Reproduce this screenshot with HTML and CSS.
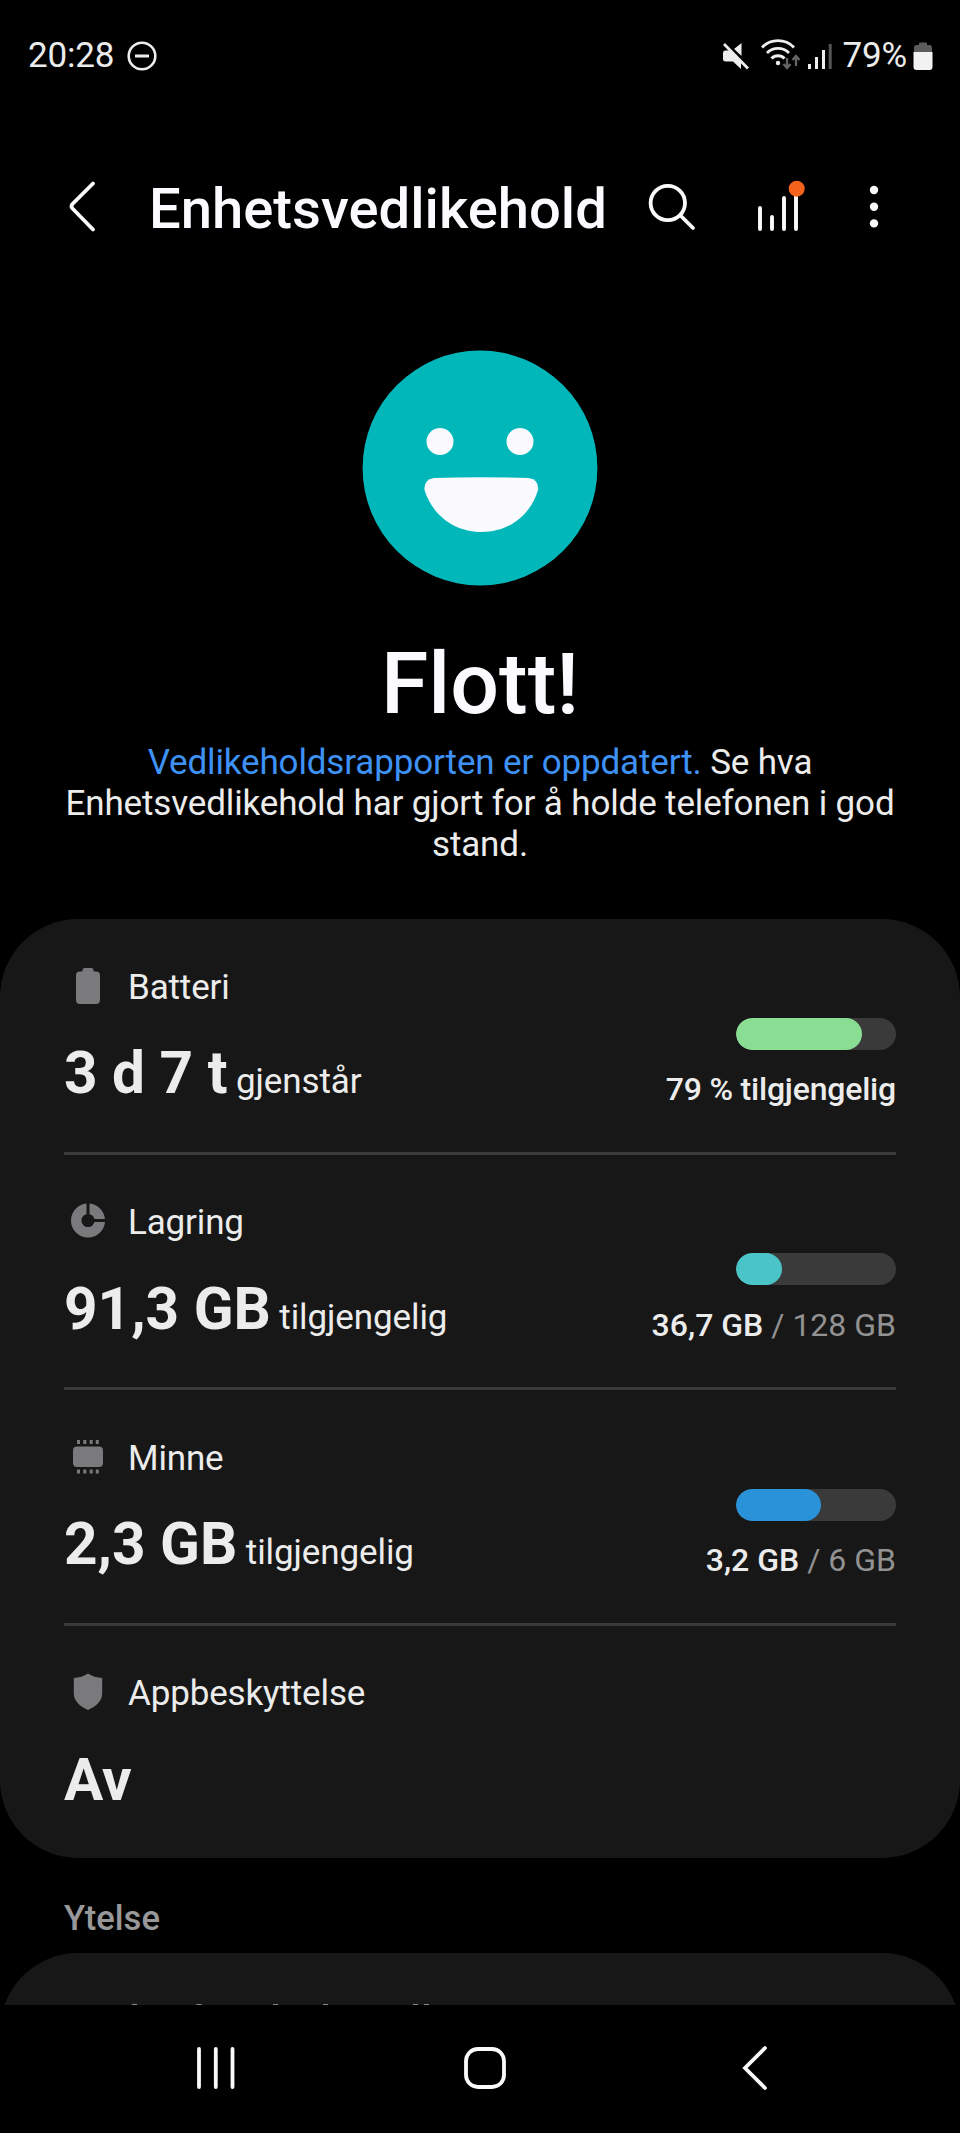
FILE: index.html
```html
<!DOCTYPE html>
<html lang="nb">
<head>
<meta charset="utf-8">
<title>Enhetsvedlikehold</title>
<link rel="stylesheet" href="styles.css">
</head>
<body>
<div class="screen">
  <div class="status">
    <span class="status-text">20:28</span>
    <svg class="dnd" width="30" height="30" viewBox="0 0 30 30"><circle cx="15" cy="15" r="13.3" fill="none" stroke="#eee" stroke-width="2.6"/><path d="M8 15h14" stroke="#eee" stroke-width="3"/></svg>
    <span class="spacer"></span>
    <svg class="mute" width="28" height="28" viewBox="0 0 28 28"><path d="M3 8.500h5l11 11V27l-8-7.500H4Q1 19.500 1 17v-6q0-2.500 2-2.500zM19.500 1v13L12 7z" fill="#eee"/><path d="M4 1l23 24" stroke="#000" stroke-width="3"/><path d="M2 2l24 24.500" stroke="#eee" stroke-width="2.800"/></svg>
    <svg class="wifi" width="40" height="32" viewBox="0 0 40 32"><g fill="none" stroke="#eee" stroke-width="2.900"><path d="M1 9.500a22 22 0 0 1 32 0"/><path d="M6 15a15.500 15.500 0 0 1 22 0"/><path d="M10.500 20.500a9 9 0 0 1 13 0"/></g><circle cx="17" cy="25" r="2.200" fill="#eee"/><path d="M26 20v9M22.500 26l3.500 4 3.500-4M35 28v-9M31.500 22l3.500-4 3.500 4" fill="none" stroke="#666" stroke-width="2.300"/></svg>
    <svg class="signal" width="26" height="28" viewBox="0 0 26 28"><path d="M2.500 22v5M9.500 15v12M16.500 8v19" stroke="#eee" stroke-width="3"/><path d="M23.200 2v25" stroke="#555" stroke-width="3"/></svg>
    <span class="status-text pct">79%</span>
    <svg width="20" height="28" viewBox="0 0 20 28"><path d="M6 3V1.500Q6 .500 7 .500h6q1 0 1 1V3h2.500Q19 3 19 6v5H1V6q0-3 2.500-3z" fill="#5c5c5c"/><path d="M.500 10h19v15q0 3-3 3h-13q-3 0-3-3z" fill="#f2f2f2"/></svg>
  </div>

  <header class="header">
    <svg class="back" width="27" height="51" viewBox="0 0 27 51"><path d="M24 2.500L3.500 23q-2 2.500 0 4.500L24 48.500" fill="none" stroke="#fafafa" stroke-width="3.800" stroke-linecap="round"/></svg>
    <h1 class="title">Enhetsvedlikehold</h1>
    <svg class="search" width="48" height="48" viewBox="0 0 48 48"><circle cx="19.800" cy="20" r="17.200" fill="none" stroke="#fafafa" stroke-width="3.800"/><path d="M32.500 32.500L45 45" stroke="#fafafa" stroke-width="3.800" stroke-linecap="round"/></svg>
    <svg class="report" width="48" height="52" viewBox="0 0 48 52"><path d="M3 28v21M15 37v12M27 18v31M39 14v35" stroke="#fafafa" stroke-width="3.900" stroke-linecap="round"/><circle cx="39.700" cy="8.700" r="8" fill="#f4621c"/></svg>
    <svg class="more" width="10" height="44" viewBox="0 0 10 44"><g fill="#fafafa"><circle cx="5" cy="5" r="4.200"/><circle cx="5" cy="21.700" r="4.200"/><circle cx="5" cy="38.400" r="4.200"/></g></svg>
  </header>

  <section class="hero">
    <svg class="face" width="236" height="236" viewBox="0 0 236 236"><circle cx="118" cy="118" r="117.400" fill="#02b7b9"/><circle cx="78" cy="91.500" r="13.500" fill="#fafaff"/><circle cx="158" cy="91.500" r="13.500" fill="#fafaff"/><path d="M72 128Q119 126.400 167 128Q177 129.500 176 140C169 164 148 182 119.500 182S70 164 62.500 140Q61.500 129.500 72 128z" fill="#fafaff"/></svg>
    <h2 class="grade">Flott!</h2>
    <p class="summary"><span class="link">Vedlikeholdsrapporten er oppdatert.</span> Se hva<br>Enhetsvedlikehold har gjort for å holde telefonen i god<br>stand.</p>
  </section>

  <main class="card">
    <div class="row">
      <div class="info">
        <div class="label"><svg width="48" height="48" viewBox="0 0 48 48"><path d="M18.500 9.500V8q0-2 2-2h7q2 0 2 2v1.500h2.500q4 0 4 4V38q0 4-4 4H16q-4 0-4-4V13.500q0-4 4-4z" fill="#7a7a7c"/></svg><span>Batteri</span></div>
        <div class="value"><b>3 d 7 t</b><span>gjenstår</span></div>
      </div>
      <div class="usage"><div class="bar"><div class="fill green" style="width:79%"></div></div><div class="amount words">79 % tilgjengelig</div></div>
    </div>
    <div class="row">
      <div class="info">
        <div class="label"><svg width="48" height="48" viewBox="0 0 48 48"><circle cx="24" cy="23.500" r="11.800" fill="none" stroke="#7a7a7c" stroke-width="10.400"/><path d="M24 23.500V5M24 23.500h19" stroke="#171717" stroke-width="3"/></svg><span>Lagring</span></div>
        <div class="value"><b>91,3 GB</b><span>tilgjengelig</span></div>
      </div>
      <div class="usage"><div class="bar"><div class="fill teal" style="width:29%"></div></div><div class="amount">36,7 GB <span class="total">/ 128 GB</span></div></div>
    </div>
    <div class="row">
      <div class="info">
        <div class="label"><svg width="48" height="48" viewBox="0 0 48 48"><rect x="9" y="13.500" width="30" height="20.500" rx="4" fill="#7a7a7c"/><path d="M14.500 7v4M20.800 7v4M27.200 7v4M33.300 7v4M14.500 36.500v4M20.800 36.500v4M27.200 36.500v4M33.300 36.500v4" stroke="#7a7a7c" stroke-width="3"/></svg><span>Minne</span></div>
        <div class="value"><b>2,3 GB</b><span>tilgjengelig</span></div>
      </div>
      <div class="usage"><div class="bar"><div class="fill blue" style="width:53.300%"></div></div><div class="amount">3,2 GB <span class="total">/ 6 GB</span></div></div>
    </div>
    <div class="row last">
      <div class="info">
        <div class="label"><svg width="48" height="48" viewBox="0 0 48 48"><path d="M24 5.500q6 4 14.200 4.500v15.500C38.200 33 32 38.500 24 42 16 38.500 9.800 33 9.800 25.500V10Q18 9.500 24 5.500z" fill="#7a7a7c"/></svg><span>Appbeskyttelse</span></div>
        <div class="value"><b>Av</b></div>
      </div>
    </div>
  </main>

  <h3 class="section">Ytelse</h3>
  <div class="peek">
    <div class="next-card">
      <!-- top edge of the first row, cut off by the navigation bar -->
      <svg width="400" height="2" viewBox="0 0 400 2"><path d="M68 .500h5M132.500 .500h5M209 .500h5M259 .500h5M349 .500h5M360 .500h5" stroke="#8a8a8a"/></svg>
    </div>
  </div>

  <nav class="nav">
    <svg width="40" height="44" viewBox="0 0 40 44"><path d="M3 3v38M19.800 3v38M36.500 3v38" stroke="#fafafa" stroke-width="3.800" stroke-linecap="round"/></svg>
    <svg class="home" width="44" height="44" viewBox="0 0 44 44"><rect x="3" y="3" width="38" height="38" rx="12" fill="none" stroke="#fafafa" stroke-width="3.800"/></svg>
    <svg width="26" height="46" viewBox="0 0 26 46"><path d="M23 3L3 23l20 20" fill="none" stroke="#fafafa" stroke-width="3.800" stroke-linecap="round"/></svg>
  </nav>
</div>
</body>
</html>
```

FILE: styles.css
```css
* { box-sizing: border-box; }
body { margin: 0; background: #000; font-family: Roboto, sans-serif; color: #ececec; }
h1, h2, h3, p { margin: 0; font-weight: 500; }
svg { display: block; flex: none; }
.screen { width: 960px; height: 2133px; display: flex; flex-direction: column; overflow: hidden; background: #000; }

.status { height: 111px; flex: none; display: flex; align-items: center; padding: 0 27px 0 28px; }
.status-text { font-size: 35px; line-height: 41px; letter-spacing: -0.2px; }
.dnd { margin-left: 13px; }
.spacer { flex: 1; }
.mute { margin-right: 11px; }
.wifi { margin-right: 6px; margin-top: -3px; }
.signal { margin-right: 10px; }
.pct { margin-right: 6px; }

.header { height: 196px; flex: none; display: flex; align-items: center; padding: 0 81px 0 69px; color: #fafaff; }
.back { margin-right: 53px; margin-top: -5px; }
.title { font-size: 56.2px; line-height: 66px; white-space: nowrap; flex: 1; margin-top: -1px; }
.search { margin-right: 61px; margin-top: -4px; }
.report { margin-right: 64px; margin-top: -7px; }
.more { margin-top: -5px; }

.hero { display: flex; flex-direction: column; align-items: center; padding-top: 43px; height: 612px; flex: none; }
.grade { font-size: 86px; line-height: 100px; margin-top: 48px; color: #fafaff; }
.summary { margin-top: 8px; font-size: 35px; line-height: 41px; font-weight: 400; letter-spacing: -0.15px; text-align: center; white-space: nowrap; }
.link { color: #3e91f5; }

.card { flex: none; height: 939px; background: #171717; border-radius: 78px; padding: 0 64px; }
.row { height: 235.5px; display: flex; justify-content: space-between; border-bottom: 3px solid #3a3a3a; }
.last { border-bottom: 0; }
.info { padding-top: 44px; }
.label { display: flex; align-items: center; gap: 16px; height: 48px; font-size: 35px; line-height: 41px; letter-spacing: -0.15px; }
.label svg { margin-top: -3px; }
.value { display: flex; align-items: baseline; gap: 8.5px; margin-top: 28px; line-height: 68px; font-size: 35px; letter-spacing: -0.1px; white-space: nowrap; }
.value b { font-size: 58.5px; font-weight: 700; letter-spacing: 0; }
.usage { padding-top: 98.5px; display: flex; flex-direction: column; align-items: flex-end; }
.bar { width: 160px; height: 32px; border-radius: 16px; background: #3a3a3a; overflow: hidden; }
.fill { height: 100%; border-radius: 16px; }
.green { background: #89de93; }
.teal { background: #4bc4c8; }
.blue { background: #2a92d8; }
.amount { margin-top: 20.5px; font-size: 32px; line-height: 38px; font-weight: 500; white-space: nowrap; }
.words { letter-spacing: -0.2px; }
.total { font-weight: 400; color: #929292; }

.section { margin: 40px 64px 0; font-size: 34.6px; line-height: 40px; color: #98989a; height: 55px; flex: none; }
.peek { height: 52px; flex: none; overflow: hidden; }
.next-card { height: 160px; background: #171717; border-radius: 78px 78px 0 0; padding: 51px 64px 0; }
.nav { flex: 1; background: #000; display: flex; align-items: center; justify-content: space-between; padding: 0 192px 2px 196px; }
.home { margin-right: 9px; }
```
